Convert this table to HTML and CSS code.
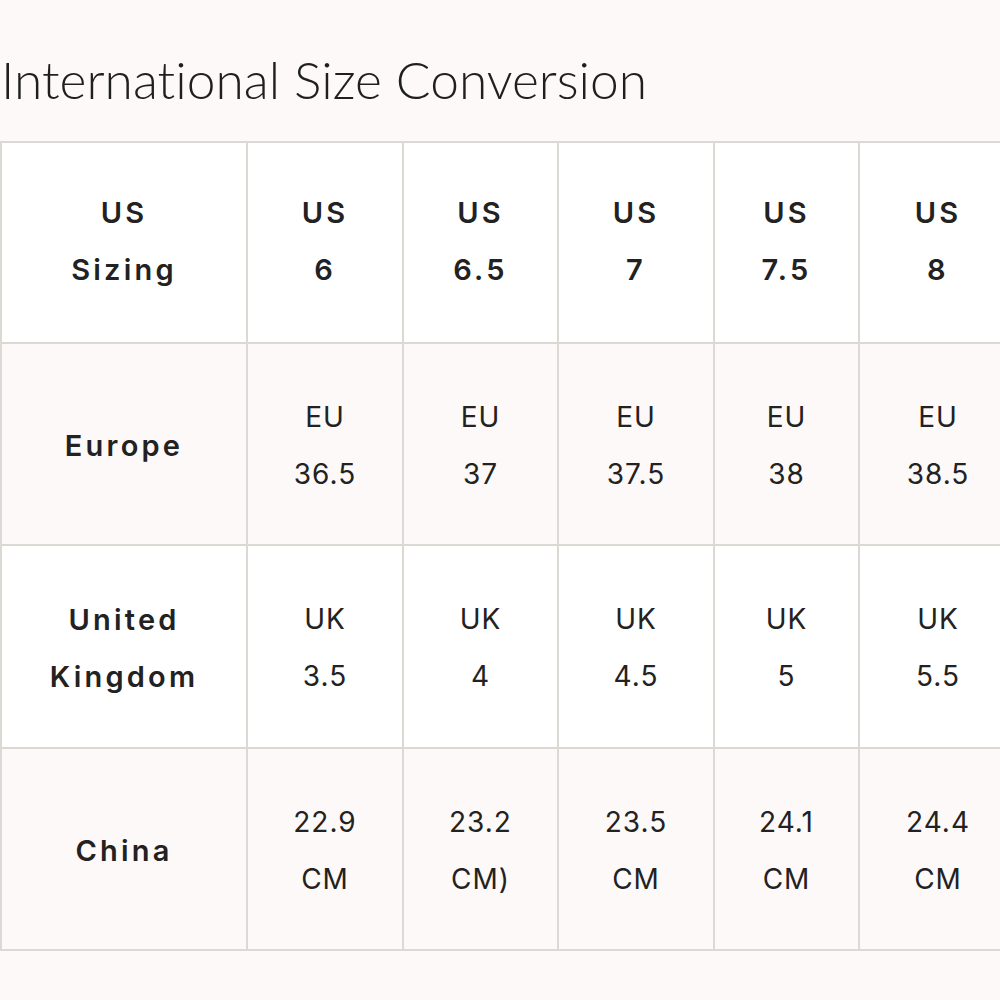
FILE: index.html
```html
<!DOCTYPE html>
<html>
<head>
<meta charset="utf-8">
<link rel="stylesheet" href="styles.css">
</head>
<body>
<div class="page">
  <h1 class="title">International Size Conversion</h1>
  <div class="table-wrap">
    <table class="sizes">
      <colgroup>
        <col class="c0"><col class="c1"><col class="c2"><col class="c3"><col class="c4"><col class="c5">
      </colgroup>
      <tr class="row-white row-head">
        <th>US<br>Sizing</th>
        <th>US<br>6</th>
        <th>US<br>6.5</th>
        <th>US<br>7</th>
        <th>US<br>7.5</th>
        <th>US<br>8</th>
      </tr>
      <tr class="row-tint">
        <th>Europe</th>
        <td>EU<br>36.5</td>
        <td>EU<br>37</td>
        <td>EU<br>37.5</td>
        <td>EU<br>38</td>
        <td>EU<br>38.5</td>
      </tr>
      <tr class="row-white row-tall">
        <th>United<br>Kingdom</th>
        <td>UK<br>3.5</td>
        <td>UK<br>4</td>
        <td>UK<br>4.5</td>
        <td>UK<br>5</td>
        <td>UK<br>5.5</td>
      </tr>
      <tr class="row-tint">
        <th>China</th>
        <td>22.9<br>CM</td>
        <td>23.2<br>CM)</td>
        <td>23.5<br>CM</td>
        <td>24.1<br>CM</td>
        <td>24.4<br>CM</td>
      </tr>
    </table>
  </div>
</div>
</body>
</html>
```

FILE: styles.css
```css
html, body {
  margin: 0;
  padding: 0;
  background: #fdf9f8;
  overflow: hidden;
}
.page {
  width: 1000px;
  height: 1000px;
  overflow: hidden;
}
.title {
  margin: 49px 0 0 0;
  padding-left: 1px;
  font-family: Lato, "Open Sans", sans-serif;
  font-weight: 300;
  font-size: 51.5px;
  line-height: 60px;
  color: #1f1f1f;
  letter-spacing: 0;
  font-variant-ligatures: none;
  white-space: nowrap;
}
.table-wrap {
  margin-top: 32px;
  width: 1020px;
}
.sizes {
  border-collapse: collapse;
  table-layout: fixed;
  width: 1016px;
  margin-left: 0;
}
.c0 { width: 246px; }
.c1 { width: 156px; }
.c2 { width: 155px; }
.c3 { width: 156px; }
.c4 { width: 145px; }
.c5 { width: 158px; }
.sizes tr { height: 202px; }
.sizes .row-head { height: 201px; }
.sizes .row-tall { height: 203px; }
.row-white { background: #ffffff; }
.row-tint { background: #fdf9f8; }
.sizes th, .sizes td {
  border: 2px solid #dcd8d4;
  text-align: center;
  vertical-align: middle;
  padding: 3px 0 0 0;
  color: #222222;
  font-family: Inter, "Open Sans", sans-serif;
  line-height: 57px;
}
.sizes th {
  font-weight: 600;
  font-size: 29px;
  letter-spacing: 3.2px;
}
.row-head th {
  padding: 0 0 4px 0;
}
.sizes td {
  font-weight: 400;
  font-size: 28px;
  letter-spacing: 1px;
}
```
